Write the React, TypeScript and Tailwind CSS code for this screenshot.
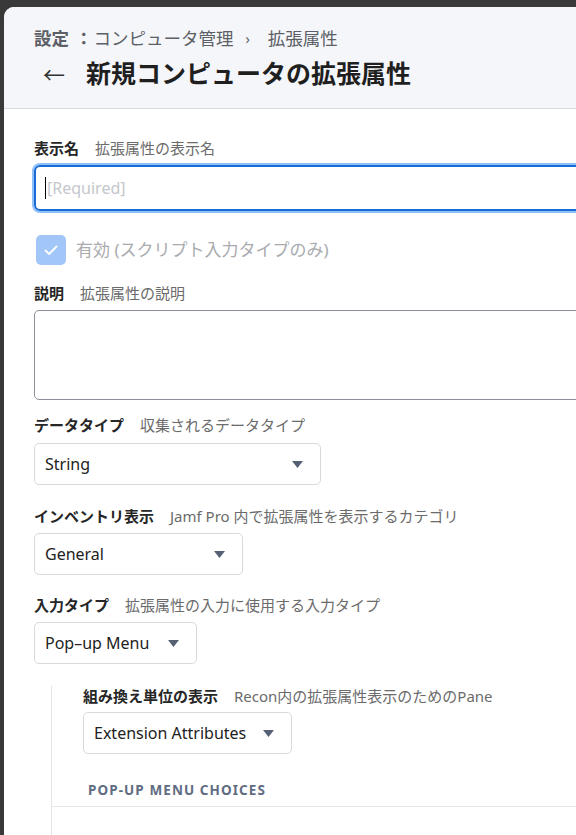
import React from 'react';

const font = "font-['Noto_Sans','Noto_Sans_CJK_JP',sans-serif]";

const Caret = () => (
  <svg width="11" height="7" viewBox="0 0 11 7" className="shrink-0">
    <path d="M0 0 H11 L5.5 7 Z" fill="#566074" />
  </svg>
);

const FieldLabel = ({ title, hint }: { title: string; hint: string }) => (
  <div className="flex items-baseline gap-[16px] h-5 leading-5">
    <span className="text-[15px] font-bold text-[#262626]">{title}</span>
    <span className="text-[15px] text-[#6b6b6b]">{hint}</span>
  </div>
);

const Select = ({ value, width }: { value: string; width: string }) => (
  <div
    className={`${width} h-[42px] border border-[#d6d9de] rounded-[5px] bg-white flex items-center justify-between pl-[10px] pr-[17px]`}
  >
    <span className="text-[16px] text-[#222]">{value}</span>
    <Caret />
  </div>
);

export default function App() {
  return (
    <div className={`${font} min-h-screen bg-[#393939] pt-[7px] pl-[4px] overflow-hidden`}>
      <div className="w-[720px] min-h-[828px] bg-white rounded-tl-[10px] overflow-hidden">
        {/* Header */}
        <div className="bg-[#f5f6fa] border-b border-[#d9dadf] pl-[30px] pt-[19px] pb-[18px]">
          <div className="flex items-center h-6 text-[17.5px] text-[#5c5f66]">
            <span className="font-bold">設定</span>
            <span className="ml-[6px] mr-[1px] font-bold">：</span>
            <span>コンピュータ管理</span>
            <span className="ml-[12px] mr-[18px] text-[14px]">›</span>
            <span>拡張属性</span>
          </div>
          <div className="flex items-center h-8 mt-2">
            <span className="ml-[9px] mr-[21px] text-[22px] text-[#333] leading-none">←</span>
            <h1 className="text-[25px] font-bold text-[#1f1f1f]">新規コンピュータの拡張属性</h1>
          </div>
        </div>

        {/* Form */}
        <div className="pl-[30px] pt-[29px]">
          <FieldLabel title="表示名" hint="拡張属性の表示名" />
          <div className="mt-[7px] h-[46px] w-[640px] rounded-[6px] border-2 border-[#1a6ad8] shadow-[0_0_0_2px_#8ec0fa] flex items-center pl-[9px]">
            <span className="w-px h-[22px] bg-black mr-px" />
            <span className="text-[16px] text-[#c4c7cc]">[Required]</span>
          </div>

          <div className="mt-[24px] flex items-center gap-[10px] ml-[2px] h-[30px]">
            <div className="w-[30px] h-[30px] rounded-[5px] bg-[#a2c6f7] flex items-center justify-center">
              <svg width="14" height="11" viewBox="0 0 14 11">
                <path d="M1.5 5.5 L5.2 9 L12.5 1.5" fill="none" stroke="#fff" strokeWidth="1.8" strokeLinecap="round" strokeLinejoin="round" />
              </svg>
            </div>
            <span className="text-[17px] text-[#a9abaf]">有効 (スクリプト入力タイプのみ)</span>
          </div>

          <div className="mt-[18px]">
            <FieldLabel title="説明" hint="拡張属性の説明" />
          </div>
          <div className="mt-[7px] h-[90px] w-[640px] rounded-[5px] border border-[#8c9098]" />

          <div className="mt-[15px]">
            <FieldLabel title="データタイプ" hint="収集されるデータタイプ" />
          </div>
          <div className="mt-[8px]">
            <Select value="String" width="w-[287px]" />
          </div>

          <div className="mt-[21px]">
            <FieldLabel title="インベントリ表示" hint="Jamf Pro 内で拡張属性を表示するカテゴリ" />
          </div>
          <div className="mt-[7px]">
            <Select value="General" width="w-[209px]" />
          </div>

          <div className="mt-[20px]">
            <FieldLabel title="入力タイプ" hint="拡張属性の入力に使用する入力タイプ" />
          </div>
          <div className="mt-[7px]">
            <Select value="Pop–up Menu" width="w-[163px]" />
          </div>

          {/* Nested pop-up settings */}
          <div className="mt-[22px] ml-[17px] border-l border-[#e3e5e9] min-h-[160px]">
            <div className="pl-[31px]">
              <FieldLabel title="組み換え単位の表示" hint="Recon内の拡張属性表示のためのPane" />
              <div className="mt-[6px]">
                <Select value="Extension Attributes" width="w-[209px]" />
              </div>
              <div className="mt-[26px] pl-[5px] h-5 leading-5 text-[13.5px] font-bold tracking-[0.08em] text-[#5f6c82] uppercase">
                Pop-up Menu Choices
              </div>
            </div>
            <div className="mt-[6px] border-b border-[#e6e7eb]" />
          </div>
        </div>
      </div>
    </div>
  );
}
